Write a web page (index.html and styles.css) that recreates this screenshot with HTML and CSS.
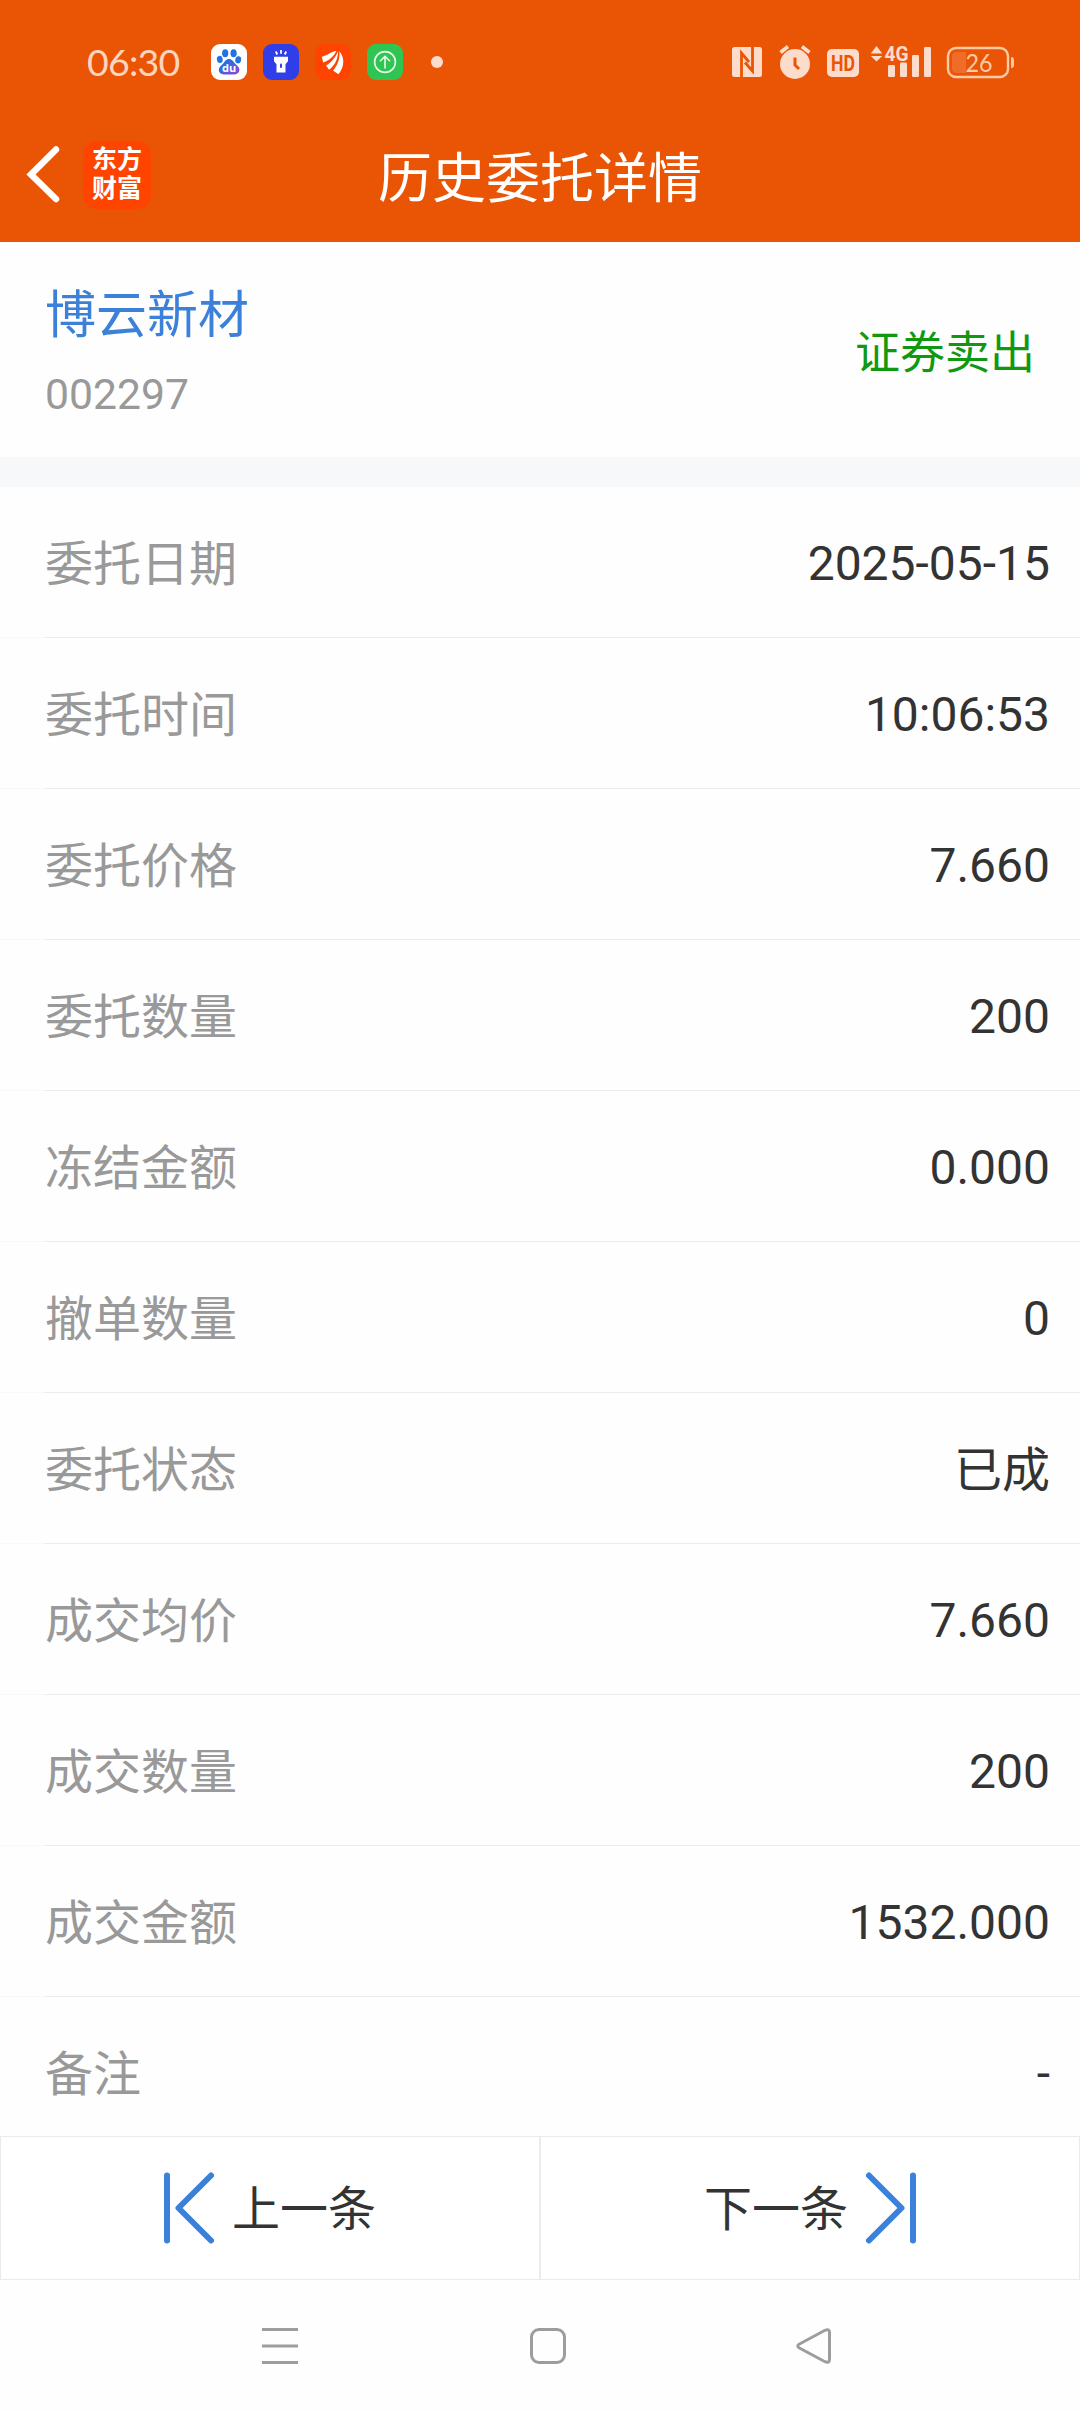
FILE: index.html
```html
<!DOCTYPE html>
<html lang="zh-CN">
<head>
  <meta charset="UTF-8">
  <meta name="viewport" content="width=device-width,initial-scale=1.0">
  <title>历史委托详情</title>
  <link rel="stylesheet" href="styles.css">
</head>
<body>

<!-- ===== 顶部 ===== -->
<header class="top">
  <div class="status">
    <div class="status-left">
      <span class="time">06:30</span>
      <svg class="app" viewBox="0 0 36 36">
        <defs><linearGradient id="paw" x1="0" y1="0" x2="1" y2="1"><stop offset=".35" stop-color="#2f6ce0"/><stop offset="1" stop-color="#a03fd8"/></linearGradient></defs>
        <rect width="36" height="36" rx="9" fill="#fff"/>
        <g fill="#2173e0">
          <ellipse cx="14.2" cy="9.2" rx="3.1" ry="4"/><ellipse cx="22.6" cy="9.2" rx="3.1" ry="4"/>
          <ellipse cx="8.8" cy="15.4" rx="2.9" ry="3.6" transform="rotate(-12 8.8 15.4)"/>
          <ellipse cx="27.2" cy="15.8" rx="2.9" ry="3.6" transform="rotate(12 27.2 15.8)"/>
        </g>
        <path d="M18 15c3 0 4.500 2.600 6 4.400 2 2 4.600 3.600 4.400 6.600-.2 3-2.400 4.400-5.400 4.400H13c-3.200 0-5.200-1.600-5.200-4.400 0-3 2.400-4.600 4.400-6.600C13.700 17.600 15 15 18 15z" fill="url(#paw)"/>
        <text class="du" x="18.200" y="28">du</text>
      </svg>
      <svg class="app" viewBox="0 0 36 36">
        <rect width="36" height="36" rx="9" fill="#2f3ee6"/>
        <path d="M12.800 7.500l1.500 3M18 6v3.800M23.200 7.500l-1.500 3" stroke="#fff" stroke-width="1.800"/>
        <path d="M11 12.800h14v4.400l-2.500 3V28.500h-9V20.200l-2.500-3z" fill="#fff"/>
        <rect x="17" y="19.500" width="2" height="4.500" rx="1" fill="#2f3ee6"/>
      </svg>
      <svg class="app" viewBox="0 0 36 36">
        <rect width="36" height="36" rx="9" fill="#ff4400"/>
        <g fill="#fff">
          <path d="M21.500 7C16 7.500 11.500 11.800 6.800 12.800l1.400 5.700C13.500 17 18.500 12.500 21.500 7z"/>
          <path d="M23 7.200C20.500 13.500 16 18.800 11 21.500l3.200 4.200C19.800 21.500 23.200 14.500 23 7.200z"/>
          <path d="M24.300 7.200c1 7.500-2 14.500-6.300 19.300l5.400 3.800C29.500 23 30 13.500 24.300 7.200z"/>
        </g>
      </svg>
      <svg class="app" viewBox="0 0 36 36">
        <rect width="36" height="36" rx="9" fill="#30c552"/>
        <g fill="none" stroke="#e6fbe9" stroke-width="1.600">
          <circle cx="18" cy="18" r="10.400"/><path d="M18 24.500V12.500M13 17.300l5-5 5 5"/>
        </g>
      </svg>
      <i class="dot"></i>
    </div>

    <svg class="status-right" viewBox="730 43 286 38">
      <g fill="#fddccb">
        <!-- NFC -->
        <rect x="732" y="47" width="30" height="30" rx="2.500"/>
        <path d="M741.500 77V53l7.500 9M752.500 47v24l-7.500-8.500" fill="none" stroke="#e95504" stroke-width="2.800"/>
        <!-- 闹钟 -->
        <circle cx="795" cy="64" r="15"/>
        <path d="M780.500 52.500l7.500-6M809.500 52.500l-7.500-6" stroke="#fddccb" stroke-width="3.600"/>
        <path d="M795 57.500v7.500l4 4" stroke="#e95504" stroke-width="3" fill="none"/>
        <!-- HD -->
        <rect x="827" y="49" width="32" height="28" rx="5"/>
        <text class="hd" x="843" y="71" textLength="24" lengthAdjust="spacingAndGlyphs">HD</text>
        <!-- 信号 -->
        <path d="M870.800 53.500l5.700-7.500 5.700 7.500zM870.800 56l5.700 5.500 5.700-5.500z"/>
        <text class="net" x="896.500" y="60.500" textLength="24" lengthAdjust="spacingAndGlyphs">4G</text>
        <rect x="888" y="65" width="7" height="12" rx="1.200"/><rect x="900" y="62.500" width="7" height="14.500" rx="1.200"/>
        <rect x="912" y="55" width="7" height="22" rx="1.200"/><rect x="924" y="47" width="7" height="30" rx="1.200"/>
        <!-- 电池 -->
        <rect x="948" y="48" width="60" height="29" rx="8" fill="none" stroke="#fdc9a5" stroke-width="2.400"/>
        <path d="M1011 57c2 0 3 1 3 3v5c0 2-1 3-3 3z" fill="#fdc9a5"/>
        <path d="M966 52h-9q-5 0-5 5v11q0 5 5 5h9z" fill="#ef6d29"/>
        <text class="bat" x="979" y="71.600" textLength="27" lengthAdjust="spacingAndGlyphs">26</text>
      </g>
    </svg>
  </div>

  <div class="navbar">
    <svg class="back" viewBox="0 0 36 58"><path d="M30 4.500L5 29.500l25 24.500" fill="none" stroke="#fff" stroke-width="6.500" stroke-linecap="round"/></svg>
    <div class="logo"><span>东方</span><span>财富</span></div>
    <h1>历史委托详情</h1>
  </div>
</header>

<!-- ===== 股票 ===== -->
<section class="stock">
  <div>
    <div class="stock-name">博云新材</div>
    <div class="stock-code">002297</div>
  </div>
  <div class="side">证券卖出</div>
</section>

<!-- ===== 明细 ===== -->
<main class="list">
  <div class="row"><span class="label">委托日期</span><span>2025-05-15</span></div>
  <div class="row"><span class="label">委托时间</span><span>10:06:53</span></div>
  <div class="row"><span class="label">委托价格</span><span>7.660</span></div>
  <div class="row"><span class="label">委托数量</span><span>200</span></div>
  <div class="row"><span class="label">冻结金额</span><span>0.000</span></div>
  <div class="row"><span class="label">撤单数量</span><span>0</span></div>
  <div class="row"><span class="label">委托状态</span><span class="cn">已成</span></div>
  <div class="row"><span class="label">成交均价</span><span>7.660</span></div>
  <div class="row"><span class="label">成交数量</span><span>200</span></div>
  <div class="row"><span class="label">成交金额</span><span>1532.000</span></div>
  <div class="row"><span class="label">备注</span><span>-</span></div>
</main>

<!-- ===== 翻页 ===== -->
<div class="pager">
  <button class="prev">
    <svg viewBox="0 0 50 72"><path d="M3 3.500v65M47 3.500L14.500 36 47 68.500"/></svg><span>上一条</span>
  </button>
  <button class="next">
    <span>下一条</span><svg viewBox="0 0 50 72"><path d="M47 3.500v65M3 3.500L35.500 36 3 68.500"/></svg>
  </button>
</div>

<!-- 系统导航键 -->
<nav class="sysnav">
  <svg viewBox="0 0 40 40"><path d="M2 3.500h36M2 20h36M2 36.500h36"/></svg>
  <svg viewBox="0 0 40 40"><rect x="4.500" y="3.500" width="33" height="33" rx="7.500"/></svg>
  <svg viewBox="0 0 40 40"><path d="M5 18.200L31 4.300q4.500-1.800 4.500 2.200v27q0 4-4.500 2.200L5 21.800q-2.500-1.800 0-3.600z"/></svg>
</nav>

</body>
</html>
```
FILE: styles.css
```css
:root{
  --c-brand:#e95504; --c-blue:#3b80d9; --c-green:#109910;
  --c-text:#333; --c-sub:#999; --c-line:#ebebeb;
}
*{box-sizing:border-box}
body{
  margin:0;width:1080px;height:2412px;overflow:hidden;
  display:flex;flex-direction:column;
  font-family:Roboto,"Noto Sans CJK SC",sans-serif;
  font-size:48px;color:var(--c-text);background:#fefefe
}
svg{display:block;flex:none}

/* 顶部 */
.top{height:242px;background:var(--c-brand);color:#fff}
.status{
  height:124px;padding:0 64px 0 87px;
  display:flex;align-items:center;justify-content:space-between
}
.status-left{display:flex;align-items:center;gap:16px}
.time{
  width:108px;font-family:Lato,sans-serif;font-size:37.5px;line-height:40px;
  letter-spacing:-.8px;color:#fdd5bd;white-space:nowrap
}
.app{width:36px;height:36px}
.dot{width:12px;height:12px;margin-left:12px;border-radius:50%;background:#fddccb}
.status-right{width:286px;height:38px}
.status text{text-anchor:middle}
.du{font:700 11px "Open Sans",sans-serif;fill:#fff}
.hd{font:700 22px Roboto,sans-serif;fill:var(--c-brand)}
.net{font:700 21px Roboto,sans-serif}
.bat{font:400 25px Lato,sans-serif;fill:#fdc9a5}

.navbar{
  height:118px;padding:0 26px;
  display:grid;grid-template-columns:57px 68px 1fr 125px
}
.back{width:36px;height:58px;margin-top:21px}
.logo{
  height:68px;margin-top:17px;padding-top:4px;border-radius:14px;background:#ff4400;
  display:flex;flex-direction:column;align-items:center;
  font-weight:700;font-size:25px;line-height:29px
}
h1{
  margin:16px 0 0;text-align:center;
  font-weight:400;font-size:54px;line-height:80px
}

/* 股票 */
.stock{
  height:245px;padding:2px 45px 0;border-bottom:30px solid #f6f8fa;
  display:flex;align-items:center;justify-content:space-between
}
.stock-name{font-size:51px;line-height:76px;color:var(--c-blue)}
.stock-code{font-size:42.7px;line-height:60px;margin-top:10px;color:var(--c-sub)}
.side{font-size:45px;padding-bottom:2px;color:var(--c-green)}

/* 明细 */
.list{height:1649px;overflow:hidden}
.row{
  height:151px;padding:2px 30px 0 45px;
  display:flex;align-items:center;justify-content:space-between;
  background:linear-gradient(90deg,#f8f8f8 45px,var(--c-line) 45px) bottom/100% 1px no-repeat
}
.label{color:var(--c-sub)}
.label,.cn{padding-bottom:8px}

/* 翻页 */
.pager{height:144px;display:flex}
.pager button{
  flex:1;padding:0;border:1px solid var(--c-line);background:#fff;
  display:flex;align-items:center;justify-content:center;gap:18px;
  font:inherit;color:inherit
}
.pager span{padding-bottom:6px}
.pager svg{
  width:50px;height:72px;fill:none;
  stroke:var(--c-blue);stroke-width:6;stroke-linecap:round;stroke-linejoin:round
}

.sysnav{
  flex:1;padding:46px 246px 0 260px;
  display:flex;justify-content:space-between
}
.sysnav svg{width:40px;height:40px;fill:none;stroke:#9d9d9d;stroke-width:3}
```
